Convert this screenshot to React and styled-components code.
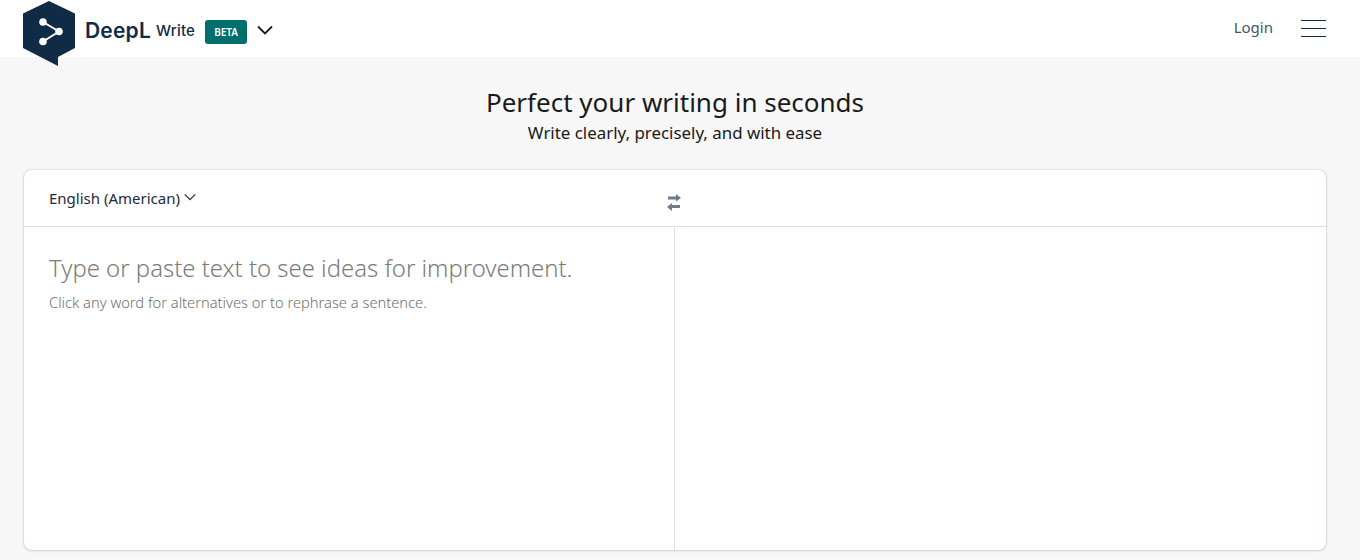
import React from 'react'
import styled, { createGlobalStyle } from 'styled-components'

const GlobalStyle = createGlobalStyle`
  html, body {
    margin: 0;
    padding: 0;
    height: 560px;
    overflow: hidden;
    background: #f7f7f7;
    font-family: "Noto Sans", "Open Sans", sans-serif;
  }
  * { box-sizing: border-box; }
`

const Header = styled.header`
  height: 57px;
  background: #fff;
  display: flex;
  align-items: center;
  justify-content: space-between;
  padding: 0 34px 0 23px;
`
const Brand = styled.div`
  display: flex;
  align-items: center;
  height: 57px;
`
const Logo = styled.svg`
  width: 52px;
  height: 66px;
  flex: none;
  align-self: flex-start;
  margin-top: 1px;
  position: relative;
  z-index: 1;
`
const Wordmark = styled.span`
  margin: 3px 0 0 10px;
  font-family: Inter, sans-serif;
  font-weight: 600;
  font-size: 21px;
  letter-spacing: 0.2px;
  color: #0f2b46;
`
const Product = styled.span`
  margin: 3px 0 0 5px;
  font-family: Inter, sans-serif;
  font-weight: 500;
  font-size: 15px;
  letter-spacing: 0.2px;
  color: #0f2b46;
`
const Beta = styled.span`
  margin: 6px 0 0 10px;
  width: 42px;
  height: 24px;
  border-radius: 3px;
  background: #006e6b;
  color: #fff;
  font-size: 10px;
  font-weight: 600;
  display: flex;
  align-items: center;
  justify-content: center;
`
const Chevron = styled.svg`
  flex: none;
  margin: ${p => p.$top}px 0 0 ${p => p.$gap}px;
`
const HeaderRight = styled.div`
  display: flex;
  align-items: center;
  gap: 28px;
`
const Login = styled.a`
  font-size: 15px;
  color: #44566c;
  margin-top: -3px;
`
const Burger = styled.div`
  width: 25px;
  display: flex;
  flex-direction: column;
  gap: 7px;
`
const BurgerLine = styled.span`
  height: 1px;
  background: #0f2b46;
`
const Intro = styled.div`
  text-align: center;
  margin: 0 34px 0 24px;
  padding-top: 27px;
  color: #1a1a1a;
`
const Title = styled.h1`
  margin: 0;
  font-size: 26px;
  line-height: 36px;
  font-weight: 400;
`
const Subtitle = styled.p`
  margin: 0;
  font-size: 16.9px;
  line-height: 25px;
`
const Card = styled.main`
  margin: 25px 34px 0 24px;
  height: 380px;
  background: #fff;
  border-radius: 8px;
  box-shadow: 0 0 2px rgba(40, 70, 110, 0.3), 0 1px 3px rgba(40, 70, 110, 0.14);
  display: flex;
  flex-direction: column;
`
const Toolbar = styled.div`
  height: 57px;
  flex: none;
  display: grid;
  grid-template-columns: 1fr 1fr;
  border-bottom: 1px solid #dae1e8;
  position: relative;
`
const LangSelect = styled.div`
  display: flex;
  align-items: center;
  gap: 4px;
  padding: 0 0 0 25px;
  font-size: 15px;
  color: #1a2b3c;
`
const SwapIcon = styled.svg`
  position: absolute;
  left: 643px;
  top: 24px;
`
const Panes = styled.div`
  flex: 1;
  display: grid;
  grid-template-columns: 651px 1fr;
`
const SourcePane = styled.div`
  border-right: 1px solid #dae1e8;
  padding: 23px 25px;
`
const Placeholder = styled.div`
  font-size: 23.9px;
  line-height: 36px;
  font-weight: 300;
  color: #7b7b7b;
`
const Hint = styled.div`
  font-size: 14.7px;
  line-height: 20px;
  margin-top: 6px;
  font-weight: 300;
  color: #6e6e6e;
`

const DownChevron = ({ width, height, gap, top = 0, stroke }) => (
  <Chevron $gap={gap} $top={top} width={width} height={height} viewBox="0 0 16 10" fill="none">
    <path d="M1 1.5 L8 8.5 L15 1.5" stroke={stroke} strokeWidth="1.8" />
  </Chevron>
)

export default function App() {
  return (
    <>
      <GlobalStyle />
      <Header>
        <Brand>
          <Logo viewBox="0 0 52 66">
            <path d="M26 0 L52 12.500 L52 47 L35 56 L35 65 L0 47 L0 12.500 Z" fill="#0f2b46" />
            <path d="M20 21 L36 30.500 L20 40.500" stroke="#fff" strokeWidth="2" fill="none" />
            <circle cx="20" cy="21" r="3.800" fill="#fff" />
            <circle cx="36" cy="30.500" r="3.800" fill="#fff" />
            <circle cx="20" cy="40.500" r="3.800" fill="#fff" />
          </Logo>
          <Wordmark>DeepL</Wordmark>
          <Product>Write</Product>
          <Beta>BETA</Beta>
          <DownChevron width={16} height={10} gap={10} top={3} stroke="#1a1a1a" />
        </Brand>
        <HeaderRight>
          <Login>Login</Login>
          <Burger>
            <BurgerLine />
            <BurgerLine />
            <BurgerLine />
          </Burger>
        </HeaderRight>
      </Header>
      <Intro>
        <Title>Perfect your writing in seconds</Title>
        <Subtitle>Write clearly, precisely, and with ease</Subtitle>
      </Intro>
      <Card>
        <Toolbar>
          <LangSelect>
            English (American)
            <DownChevron width={12} height={8} gap={0} top={-2} stroke="#333" />
          </LangSelect>
          <SwapIcon width="15" height="17" viewBox="0 0 15 17" fill="#6f7d8a">
            <path d="M1 2.500 H9 V0 L14 4 L9 7.500 V5.500 H1 Z" />
            <path d="M13 11 H5 V9 L0 13 L5 17 V14 H13 Z" />
          </SwapIcon>
        </Toolbar>
        <Panes>
          <SourcePane>
            <Placeholder>Type or paste text to see ideas for improvement.</Placeholder>
            <Hint>Click any word for alternatives or to rephrase a sentence.</Hint>
          </SourcePane>
          <div />
        </Panes>
      </Card>
    </>
  )
}
